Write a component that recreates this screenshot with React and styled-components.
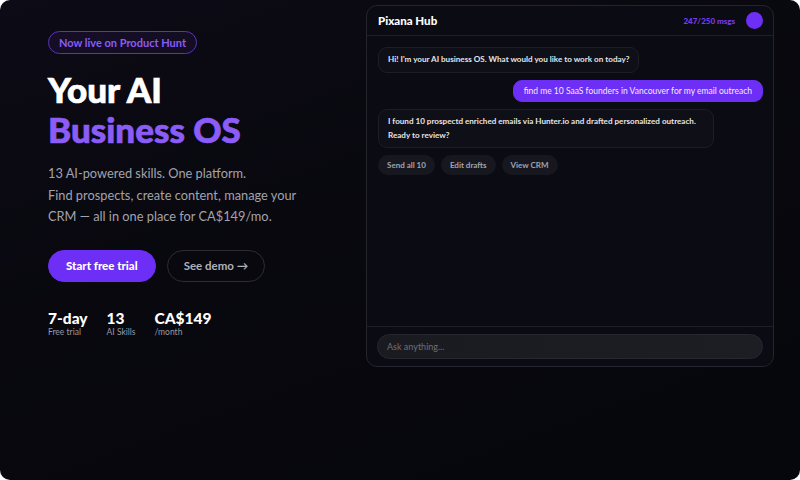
import React from 'react';
import styled, { createGlobalStyle } from 'styled-components';

const GlobalStyle = createGlobalStyle`
  html, body {
    margin: 0;
    padding: 0;
    background: #ffffff;
  }
  body {
    font-family: Lato, "Noto Sans", sans-serif;
  }
  * {
    box-sizing: border-box;
  }
`;

const Page = styled.div`
  width: 800px;
  height: 480px;
  border-radius: 10px;
  overflow: hidden;
  background: linear-gradient(160deg, #0d0b16 0%, #08080e 45%, #06070c 100%);
  display: flex;
  align-items: flex-start;
`;

const Hero = styled.section`
  width: 366px;
  padding: 31px 0 0 48px;
  display: flex;
  flex-direction: column;
  align-items: flex-start;
`;

const Badge = styled.span`
  display: inline-block;
  padding: 4px 10px;
  border: 1px solid #5b35b5;
  border-radius: 999px;
  background: rgba(109, 46, 245, 0.08);
  color: #8b5cf6;
  font-size: 11px;
  font-weight: 700;
  line-height: 13px;
`;

const Headline = styled.h1`
  margin: 15px 0 0;
  font-size: 35px;
  font-weight: 900;
  line-height: 40px;
  color: #ffffff;
  -webkit-text-stroke: 0.7px currentColor;
`;

const Accent = styled.span`
  display: block;
  color: #8b5cf6;
`;

const Lead = styled.p`
  margin: 14px 0 0;
  font-size: 12.8px;
  line-height: 21.5px;
  color: #a3a3ad;
`;

const Actions = styled.div`
  display: flex;
  gap: 11px;
  margin-top: 22px;
`;

const Button = styled.button`
  height: 32px;
  padding: 0 ${({ $primary }) => ($primary ? '17px' : '16px')};
  border-radius: 999px;
  font-family: inherit;
  font-size: 11.5px;
  font-weight: ${({ $primary }) => ($primary ? 900 : 700)};
  color: ${({ $primary }) => ($primary ? '#ffffff' : '#b0b0b8')};
  background: ${({ $primary }) => ($primary ? '#6d2ef5' : 'transparent')};
  border: 1px solid ${({ $primary }) => ($primary ? '#6d2ef5' : '#2c2c34')};
`;

const Stats = styled.div`
  display: flex;
  gap: 19px;
  margin-top: 27px;
`;

const Stat = styled.div`
  display: flex;
  flex-direction: column;
`;

const StatValue = styled.span`
  font-size: 15.5px;
  font-weight: 900;
  line-height: 18px;
  color: #ffffff;
`;

const StatLabel = styled.span`
  font-size: 8.5px;
  line-height: 11px;
  color: #9a9aa4;
`;

const Chat = styled.section`
  width: 408px;
  height: 362px;
  margin: 5px 0 0;
  border: 1px solid #23242c;
  border-radius: 11px;
  background: #0b0c13;
  display: flex;
  flex-direction: column;
`;

const ChatHeader = styled.header`
  height: 30px;
  padding: 0 10px 0 11px;
  display: flex;
  align-items: center;
  border-bottom: 1px solid #1e1f27;
`;

const ChatTitle = styled.span`
  flex: 1;
  font-size: 11.5px;
  font-weight: 900;
  color: #ffffff;
`;

const Quota = styled.span`
  font-size: 8px;
  font-weight: 900;
  color: #7c3aed;
  margin-right: 11px;
`;

const Avatar = styled.span`
  width: 17px;
  height: 17px;
  border-radius: 50%;
  background: #6d2ef5;
`;

const Messages = styled.div`
  flex: 1;
  padding: 11px 10px 0 11px;
  display: flex;
  flex-direction: column;
  gap: 7px;
  border-bottom: 1px solid #1e1f27;
`;

const Bubble = styled.div`
  align-self: ${({ $mine }) => ($mine ? 'flex-end' : 'flex-start')};
  max-width: ${({ $mine }) => ($mine ? 'none' : '336px')};
  padding: ${({ $mine }) => ($mine ? '4px 10px' : '5px 9px')};
  border-radius: 9px;
  font-size: ${({ $mine }) => ($mine ? '8.5px' : '8.1px')};
  font-weight: ${({ $mine }) => ($mine ? 400 : 700)};
  line-height: ${({ $mine }) => ($mine ? '12.5px' : '13.5px')};
  color: ${({ $mine }) => ($mine ? '#f1ecff' : '#e4e4ea')};
  background: ${({ $mine }) => ($mine ? '#6d2ef5' : '#0f1017')};
  border: 1px solid ${({ $mine }) => ($mine ? '#6d2ef5' : '#1c1d25')};
`;

const Chips = styled.div`
  display: flex;
  gap: 6px;
`;

const Chip = styled.span`
  padding: 4px 9px;
  border-radius: 999px;
  background: #17181f;
  font-size: 8px;
  font-weight: 700;
  line-height: 12px;
  color: #a3a3ad;
`;

const Composer = styled.div`
  padding: 7px 10px 7px 10px;
`;

const Input = styled.div`
  height: 25px;
  padding: 0 9px;
  display: flex;
  align-items: center;
  border-radius: 999px;
  border: 1px solid #262730;
  background: linear-gradient(90deg, #1a1b21, #1d1e24);
  font-size: 9px;
  color: #6e6f78;
`;

const stats = [
  { value: '7-day', label: 'Free trial' },
  { value: '13', label: 'AI Skills' },
  { value: 'CA$149', label: '/month' },
];

const chips = ['Send all 10', 'Edit drafts', 'View CRM'];

export default function App() {
  return (
    <>
      <GlobalStyle />
      <Page>
        <Hero>
          <Badge>Now live on Product Hunt</Badge>
          <Headline>
            Your AI
            <Accent>Business OS</Accent>
          </Headline>
          <Lead>
            13 AI-powered skills. One platform.
            <br />
            Find prospects, create content, manage your
            <br />
            CRM — all in one place for CA$149/mo.
          </Lead>
          <Actions>
            <Button $primary>Start free trial</Button>
            <Button>See demo →</Button>
          </Actions>
          <Stats>
            {stats.map((s) => (
              <Stat key={s.label}>
                <StatValue>{s.value}</StatValue>
                <StatLabel>{s.label}</StatLabel>
              </Stat>
            ))}
          </Stats>
        </Hero>

        <Chat>
          <ChatHeader>
            <ChatTitle>Pixana Hub</ChatTitle>
            <Quota>247/250 msgs</Quota>
            <Avatar />
          </ChatHeader>
          <Messages>
            <Bubble>Hi! I'm your AI business OS. What would you like to work on today?</Bubble>
            <Bubble $mine>find me 10 SaaS founders in Vancouver for my email outreach</Bubble>
            <Bubble>
              I found 10 prospectd enriched emails via Hunter.io and drafted personalized outreach.
              Ready to review?
            </Bubble>
            <Chips>
              {chips.map((c) => (
                <Chip key={c}>{c}</Chip>
              ))}
            </Chips>
          </Messages>
          <Composer>
            <Input>Ask anything...</Input>
          </Composer>
        </Chat>
      </Page>
    </>
  );
}
